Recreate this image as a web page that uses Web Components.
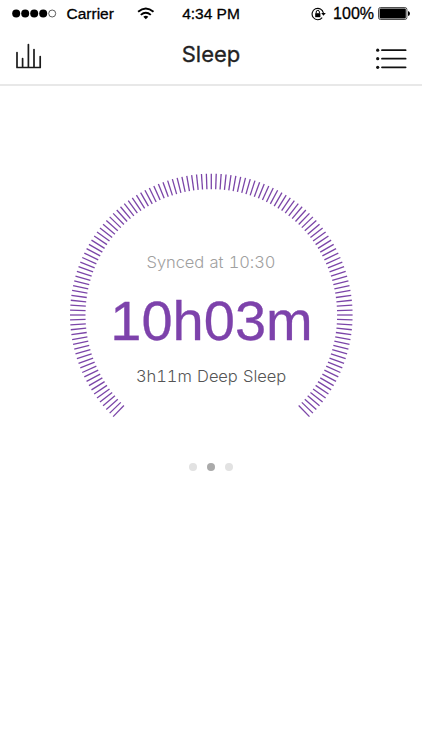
<!DOCTYPE html>
<html lang="en">
<head>
<meta charset="utf-8">
<title>Sleep</title>
<style>
  html, body {
    margin: 0;
    height: 100%;
    background: #fff;
  }
  body {
    font-family: "Liberation Sans", Arial, sans-serif;
    color: #111;
  }
</style>
</head>
<body>
<sleep-app></sleep-app>

<script>
class StatusBar extends HTMLElement {
  constructor() {
    super();
    this.attachShadow({ mode: 'open' });
  }

  connectedCallback() {
    const carrier = this.getAttribute('carrier') || '';
    const time = this.getAttribute('time') || '';
    const battery = this.getAttribute('battery') || '';

    const signal = [0, 1, 2, 3, 4].map(i => i < 4
      ? `<circle cx="${4.2 + i * 9}" cy="4.5" r="4" fill="#000" />`
      : `<circle cx="${4.2 + i * 9}" cy="4.5" r="3.5" fill="none" stroke="#333" stroke-width="0.8" />`
    ).join('');

    this.shadowRoot.innerHTML = `
      <style>
        :host {
          display: grid;
          grid-template-columns: 1fr auto 1fr;
          align-items: center;
          height: 27px;
          padding: 0 11px 0 12px;
          box-sizing: border-box;
          font-size: 15.5px;
          color: #000;
          -webkit-text-stroke: 0.3px #000;
        }
        div {
          display: flex;
          align-items: center;
        }
        svg { display: block; flex: none; }
        .carrier { margin-left: 9.5px; }
        .wifi { margin-left: 23px; }
        .time { margin-left: -1px; }
        .right { justify-content: flex-end; }
        .percent { margin: 0 4px 0 7px; font-size: 16px; }
      </style>
      <div>
        <svg width="45" height="9">${signal}</svg>
        <span class="carrier">${carrier}</span>
        <svg class="wifi" width="18" height="13" viewBox="0 0 18 13" fill="none" stroke="#000" stroke-width="1.9">
          <path d="M1.1 4.8 Q8.8 -1.9 16.5 4.8" />
          <path d="M3.8 7.9 Q8.8 3.5 13.8 7.9" />
          <path d="M8.8 12.2 L6.3 9.8 Q8.8 7.9 11.3 9.8 Z" fill="#000" stroke="none" />
        </svg>
      </div>
      <span class="time">${time}</span>
      <div class="right">
        <svg width="15" height="14" viewBox="0 0 15 14" fill="none" stroke="#000">
          <path d="M11.2 10.7 A5.7 5.7 0 1 1 12.4 6" stroke-width="1.1" />
          <path d="M10.2 6 H14.8 L12.5 8.8 Z" fill="#000" stroke="none" />
          <rect x="4.2" y="6.2" width="5.2" height="4" fill="#000" stroke="none" />
          <path d="M5.2 6.4 V5 a1.6 1.6 0 0 1 3.2 0 V6.4" />
        </svg>
        <span class="percent">${battery}</span>
        <svg width="33" height="13" viewBox="0 0 33 13">
          <rect x="0.5" y="0.5" width="28.4" height="12" rx="2" fill="none" stroke="#222" stroke-width="0.8" />
          <rect x="1.6" y="1.6" width="26.2" height="9.8" rx="1" fill="#000" />
          <path d="M30 4 Q32 4.5 32 6.5 Q32 8.5 30 9 Z" fill="#000" />
        </svg>
      </div>
    `;
  }
}

class NavBar extends HTMLElement {
  constructor() {
    super();
    this.attachShadow({ mode: 'open' });
  }

  connectedCallback() {
    this.shadowRoot.innerHTML = `
      <style>
        :host {
          display: grid;
          grid-template-columns: 1fr auto 1fr;
          height: 59px;
          padding: 0 15px;
          box-sizing: border-box;
          border-bottom: 2px solid #e8e8e8;
        }
        svg { display: block; }
        .chart { margin-top: 16px; }
        .list { margin-top: 21px; justify-self: end; }
        h1 {
          margin: 13px 0 0;
          font: 400 22px/28px Inter, "Liberation Sans", sans-serif;
          -webkit-text-stroke: 0.3px #222;
          color: #222;
        }
      </style>
      <svg class="chart" width="28" height="27" viewBox="0 0 28 27" fill="none" stroke="#1a1a1a" stroke-width="1.7" stroke-linecap="round" stroke-linejoin="round">
        <path d="M2 9.5 V24.5 H25.2 V13.5 M7.6 15.5 V24.5 M13.4 1.5 V24.5 M19 6.5 V24.5" />
      </svg>
      <h1><slot></slot></h1>
      <svg class="list" width="32" height="22" viewBox="0 0 32 22">
        <g fill="#111">
          <circle cx="2.7" cy="2.2" r="1.6" />
          <circle cx="2.7" cy="10.7" r="1.6" />
          <circle cx="2.7" cy="19.3" r="1.6" />
        </g>
        <path d="M7 2.2 H30.6 M7 10.7 H30.6 M7 19.3 H30.6" stroke="#111" stroke-width="1.8" stroke-linecap="round" />
      </svg>
    `;
  }
}

class SleepGauge extends HTMLElement {
  constructor() {
    super();
    this.attachShadow({ mode: 'open' });
  }

  connectedCallback() {
    // one tick every two degrees, open at the bottom
    let ticks = '';
    for (let deg = -136; deg <= 136; deg += 2) {
      ticks += `<line y1="-141.3" y2="-125.8" transform="rotate(${deg})" />`;
    }

    this.shadowRoot.innerHTML = `
      <style>
        :host {
          display: grid;
          width: 284px;
          height: 246px;
        }
        svg, .content { grid-area: 1 / 1; }
        .content {
          display: flex;
          flex-direction: column;
          align-items: center;
          white-space: nowrap;
        }
        .synced, .deep {
          font: 300 16.5px/22px Inter, "Liberation Sans", sans-serif;
          font-variant-numeric: tabular-nums;
          word-spacing: 1px;
        }
        .synced {
          margin-top: 78px;
          letter-spacing: -0.08px;
          color: #a0a0a0;
        }
        .total {
          margin-top: 15px;
          padding-left: 1px;
          font-size: 56px;
          line-height: 66px;
          color: #7d42ab;
          -webkit-text-stroke: 0.3px #7d42ab;
        }
        .deep {
          margin-top: 11px;
          letter-spacing: -0.08px;
          color: #555;
        }
      </style>
      <svg width="284" height="246" viewBox="-142.3 -142 284 246" stroke="#7b45a8" stroke-width="1.3">${ticks}</svg>
      <div class="content">
        <div class="synced"><slot name="synced"></slot></div>
        <div class="total"><slot name="total"></slot></div>
        <div class="deep"><slot name="deep"></slot></div>
      </div>
    `;
  }
}

class PageDots extends HTMLElement {
  constructor() {
    super();
    this.attachShadow({ mode: 'open' });
  }

  connectedCallback() {
    const count = Number(this.getAttribute('count') || 3);
    const active = Number(this.getAttribute('active') || 0);
    let dots = '';
    for (let i = 0; i < count; i++) {
      dots += `<i class="${i === active ? 'on' : ''}"></i>`;
    }

    this.shadowRoot.innerHTML = `
      <style>
        :host {
          display: flex;
          gap: 10px;
        }
        i {
          width: 8px;
          height: 8px;
          border-radius: 50%;
          background: #e2e2e2;
        }
        .on { background: #aaa; }
      </style>
      ${dots}
    `;
  }
}

class SleepApp extends HTMLElement {
  constructor() {
    super();
    this.attachShadow({ mode: 'open' });
  }

  connectedCallback() {
    this.shadowRoot.innerHTML = `
      <style>
        :host {
          display: block;
          height: 100%;
          overflow: hidden;
        }
        main {
          display: flex;
          flex-direction: column;
          align-items: center;
          padding-top: 87px;
        }
        page-dots { margin-top: 44px; }
      </style>
      <status-bar carrier="Carrier" time="4:34 PM" battery="100%"></status-bar>
      <nav-bar>Sleep</nav-bar>
      <main>
        <sleep-gauge>
          <span slot="synced">Synced at 10:30</span>
          <span slot="total">10h03m</span>
          <span slot="deep">3h11m Deep Sleep</span>
        </sleep-gauge>
        <page-dots count="3" active="1"></page-dots>
      </main>
    `;
  }
}

customElements.define('status-bar', StatusBar);
customElements.define('nav-bar', NavBar);
customElements.define('sleep-gauge', SleepGauge);
customElements.define('page-dots', PageDots);
customElements.define('sleep-app', SleepApp);
</script>
</body>
</html>
